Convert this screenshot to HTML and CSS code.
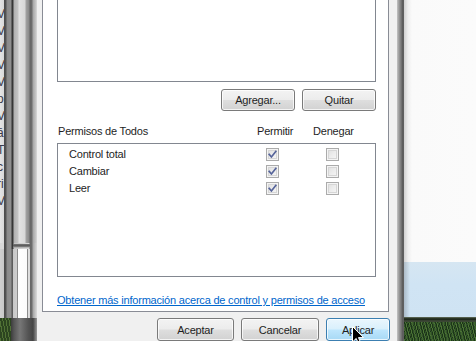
FILE: index.html
```html
<!DOCTYPE html>
<html lang="es">
<head>
<meta charset="utf-8">
<title>Permisos</title>
<link rel="stylesheet" href="styles.css">
</head>
<body>
<div class="screen">
  <div class="left-strip">
    <div class="ls-top">
      <div class="bg-text">
        <span>V</span><span>V</span><span>V</span><span>V</span><span>V</span><span>o</span><span>V</span><span>ā</span><span>T</span><span>c</span><span>ri</span><span>V</span>
      </div>
    </div>
    <div class="ls-corner"></div>
    <div class="ls-bottom"></div>
    <div class="ls-grass"></div>
  </div>

  <div class="dialog">
    <div class="tabpanel">
      <div class="listbox top-list"></div>
      <div class="btn-row">
        <button class="btn w74">Agregar...</button>
        <button class="btn w74">Quitar</button>
      </div>
      <div class="perm-head">
        <span>Permisos de Todos</span>
        <span>Permitir</span>
        <span>Denegar</span>
      </div>
      <div class="listbox perm-list">
        <div class="perm-row">
          <span>Control total</span>
          <span class="cb"><svg viewBox="0 0 11 11"><path d="M2.2 5.4 L4.4 8 L8.8 2.4"/></svg></span>
          <span></span>
          <span class="cb"></span>
        </div>
        <div class="perm-row">
          <span>Cambiar</span>
          <span class="cb"><svg viewBox="0 0 11 11"><path d="M2.2 5.4 L4.4 8 L8.8 2.4"/></svg></span>
          <span></span>
          <span class="cb"></span>
        </div>
        <div class="perm-row">
          <span>Leer</span>
          <span class="cb"><svg viewBox="0 0 11 11"><path d="M2.2 5.4 L4.4 8 L8.8 2.4"/></svg></span>
          <span></span>
          <span class="cb"></span>
        </div>
      </div>
      <a class="link" href="#">Obtener más información acerca de control y permisos de acceso</a>
    </div>
    <div class="dlg-buttons">
      <button class="btn w77">Aceptar</button>
      <button class="btn w78">Cancelar</button>
      <button class="btn w64 hover">Aplicar</button>
    </div>
  </div>

  <div class="right-frame"></div>

  <div class="desktop">
    <div class="d-white"></div>
    <div class="d-blue"></div>
    <div class="d-line"></div>
    <div class="d-grass"></div>
  </div>

  <svg class="cursor" width="13" height="20" viewBox="0 0 13 20">
    <path d="M0.5 0.5 L0.5 16 L4.2 12.4 L6.8 18.5 L9 17.6 L6.5 11.6 L11.5 11.6 Z" fill="#000" stroke="#fff" stroke-width="1"/>
  </svg>
</div>
</body>
</html>
```

FILE: styles.css
```css
* { box-sizing: border-box; margin: 0; padding: 0; }

html, body {
  width: 476px;
  height: 341px;
  overflow: hidden;
}

body {
  font-family: "Liberation Sans", Arial, sans-serif;
  font-size: 11px;
  letter-spacing: -0.2px;
  color: #1e1e1e;
  background: #fbfbfb;
}

.screen {
  position: relative;
  display: flex;
  width: 476px;
  height: 341px;
  overflow: hidden;
}

/* ---------- left: edges of background windows ---------- */
.left-strip {
  width: 37px;
  flex: none;
  display: flex;
  flex-direction: column;
}

.ls-top {
  flex: 1;
  background: linear-gradient(to right,
    #e4e4e4 0, #d8d8d8 4px,
    #4a4a4a 4px, #555 6px,
    #8a8a8a 7px, #909090 11px,
    #333 12px, #3a3a3a 13px,
    #b0b0b0 14px, #c4c4c4 18px,
    #e2e2e2 19px, #d8d8d8 25px,
    #a2a2a2 26px, #8a8a8a 29px,
    #666 30px, #6e6e6e 32px,
    #a6a6a6 33px, #c8c8c8 36px, #dcdcdc 37px);
}

.bg-text {
  width: 4px;
  overflow: hidden;
  display: flex;
  flex-direction: column;
  padding-top: 6px;
  font-size: 12px;
  line-height: 17px;
  letter-spacing: 0;
  color: #3a3a4a;
}
.bg-text span { display: block; margin-left: -3px; }

.ls-corner {
  height: 6px;
  background:
    linear-gradient(to bottom, transparent 0, transparent 1px, #777 1px, #555 3px, #999 4px, transparent 5px) 13px 0 / 17px 100% no-repeat,
    linear-gradient(to right,
      #d8d8d8 0, #d8d8d8 4px, #4a4a4a 4px, #555 6px, #8a8a8a 7px, #909090 11px,
      #333 12px, #3a3a3a 13px, #c4c4c4 14px, #d8d8d8 29px,
      #666 30px, #6e6e6e 32px, #a6a6a6 33px, #dcdcdc 37px);
}

.ls-bottom {
  height: 69px;
  background: linear-gradient(to right,
    #d0d0d0 0, #c8c8c8 4px,
    #4a4a4a 4px, #555 6px,
    #8a8a8a 7px, #909090 11px,
    #555 12px, #666 13px,
    #c8c8c8 13px, #cfcfcf 17px,
    #8c8c8c 17px, #8c8c8c 18px,
    #ffffff 18px, #fbfbfb 27px,
    #8c8c8c 27px, #8c8c8c 28px,
    #e0e0e0 28px, #d8d8d8 30px,
    #666 30px, #6e6e6e 32px,
    #a6a6a6 33px, #dcdcdc 37px);
}

.ls-grass {
  flex: none;
  height: 23px;
  background:
    linear-gradient(to right, transparent 0, transparent 11px, #3c3c3c 11px, #555 14px, #777 20px, #555 28px, #444 33px, #999 37px),
    repeating-linear-gradient(80deg, rgba(110,150,70,0.55) 0 1px, rgba(0,0,0,0) 1px 3px),
    #2c4520;
}

/* ---------- dialog ---------- */
.dialog {
  width: 360px;
  flex: none;
  background: #f0f0f0;
  display: flex;
  flex-direction: column;
}

.tabpanel {
  margin-left: 5px;
  width: 347px;
  height: 317px;
  background: #fff;
  border: 1px solid #898c95;
  border-top: none;
  padding: 0 12px 0 14px;
  display: flex;
  flex-direction: column;
}

.listbox {
  border: 1px solid #828790;
  background: #fff;
}

.top-list {
  height: 82px;
  border-top: none;
  flex: none;
}

.btn-row {
  margin-top: 7px;
  display: flex;
  justify-content: flex-end;
  gap: 7px;
}

.btn {
  height: 22px;
  font-family: "Liberation Sans", Arial, sans-serif;
  font-size: 11px;
  letter-spacing: -0.2px;
  color: #1e1e1e;
  border: 1px solid #7a7a7a;
  border-radius: 3px;
  background: linear-gradient(#f3f3f3 0%, #ececec 48%, #dedede 52%, #d2d2d2 100%);
  box-shadow: inset 0 0 0 1px rgba(255,255,255,0.75);
  line-height: 20px;
  text-align: center;
  padding: 0;
}
.btn.hover {
  border-color: #3c7fb1;
  background: linear-gradient(#eaf6fd 0%, #d9f0fc 48%, #bee6fd 52%, #a7d9f5 100%);
}
.w74 { width: 74px; }
.w77 { width: 77px; }
.w78 { width: 78px; }
.w64 { width: 64px; }

.perm-head {
  margin-top: 13px;
  height: 14px;
  line-height: 14px;
  display: grid;
  grid-template-columns: 199px 56px auto;
  padding-left: 1px;
}

.perm-list {
  margin-top: 5px;
  height: 134px;
  padding-top: 2px;
  flex: none;
}

.perm-row {
  height: 17px;
  display: grid;
  grid-template-columns: 197px 13px 47px 13px;
  align-items: center;
  padding-left: 11px;
  line-height: 17px;
}

.cb {
  width: 13px;
  height: 13px;
  border: 1px solid #ababab;
  background: linear-gradient(135deg, #dcdcdc 0%, #ececec 50%, #f8f8f8 100%);
  box-shadow: inset 0 0 0 1px #f4f4f4, inset 0 0 0 2px #d6d6d6;
  display: block;
}
.cb svg {
  display: block;
  width: 11px;
  height: 11px;
}
.cb svg path {
  fill: none;
  stroke: #56649a;
  stroke-width: 1.7;
  stroke-linecap: square;
}

.link {
  margin-top: 16px;
  line-height: 14px;
  color: #0066cc;
  text-decoration: underline;
  white-space: nowrap;
}

.dlg-buttons {
  margin-top: 6px;
  display: flex;
  justify-content: flex-end;
  gap: 7px;
  padding-right: 7px;
}
.dlg-buttons .btn { height: 23px; flex: none; }

/* ---------- right: dialog frame and desktop ---------- */
.right-frame {
  width: 7px;
  flex: none;
  background: linear-gradient(to right, #c4c4c4 0, #9a9a9a 2px, #7a7a7a 4px, #555 6px, #6a6a6a 7px);
}

.desktop {
  flex: 1;
  display: flex;
  flex-direction: column;
}
.d-white {
  height: 262px;
  background: linear-gradient(to right, #d0d0d0 0, #efefef 4px, #fafafa 8px, #fbfbfb 100%);
}
.d-blue {
  height: 55px;
  background:
    linear-gradient(to right, rgba(0,0,0,0.18) 0, rgba(0,0,0,0) 6px),
    linear-gradient(to bottom, #d6e6f2 0, #d0e4f4 40%, #cfe3f3 100%);
}
.d-line {
  height: 5px;
  background: linear-gradient(to bottom, #7a8470 0, #2e3a2a 1px, #1c2418 3px, #4e5a46 4px, #2a3424 5px);
}
.d-grass {
  flex: 1;
  background:
    repeating-linear-gradient(75deg, rgba(110,160,70,0.45) 0 1px, rgba(0,0,0,0) 1px 3px),
    repeating-linear-gradient(105deg, rgba(10,25,5,0.5) 0 1px, rgba(0,0,0,0) 1px 2px),
    #30522a;
}

/* ---------- mouse pointer over "Aplicar" ---------- */
.cursor {
  position: absolute;
  left: 352px;
  top: 326px;
}
```
